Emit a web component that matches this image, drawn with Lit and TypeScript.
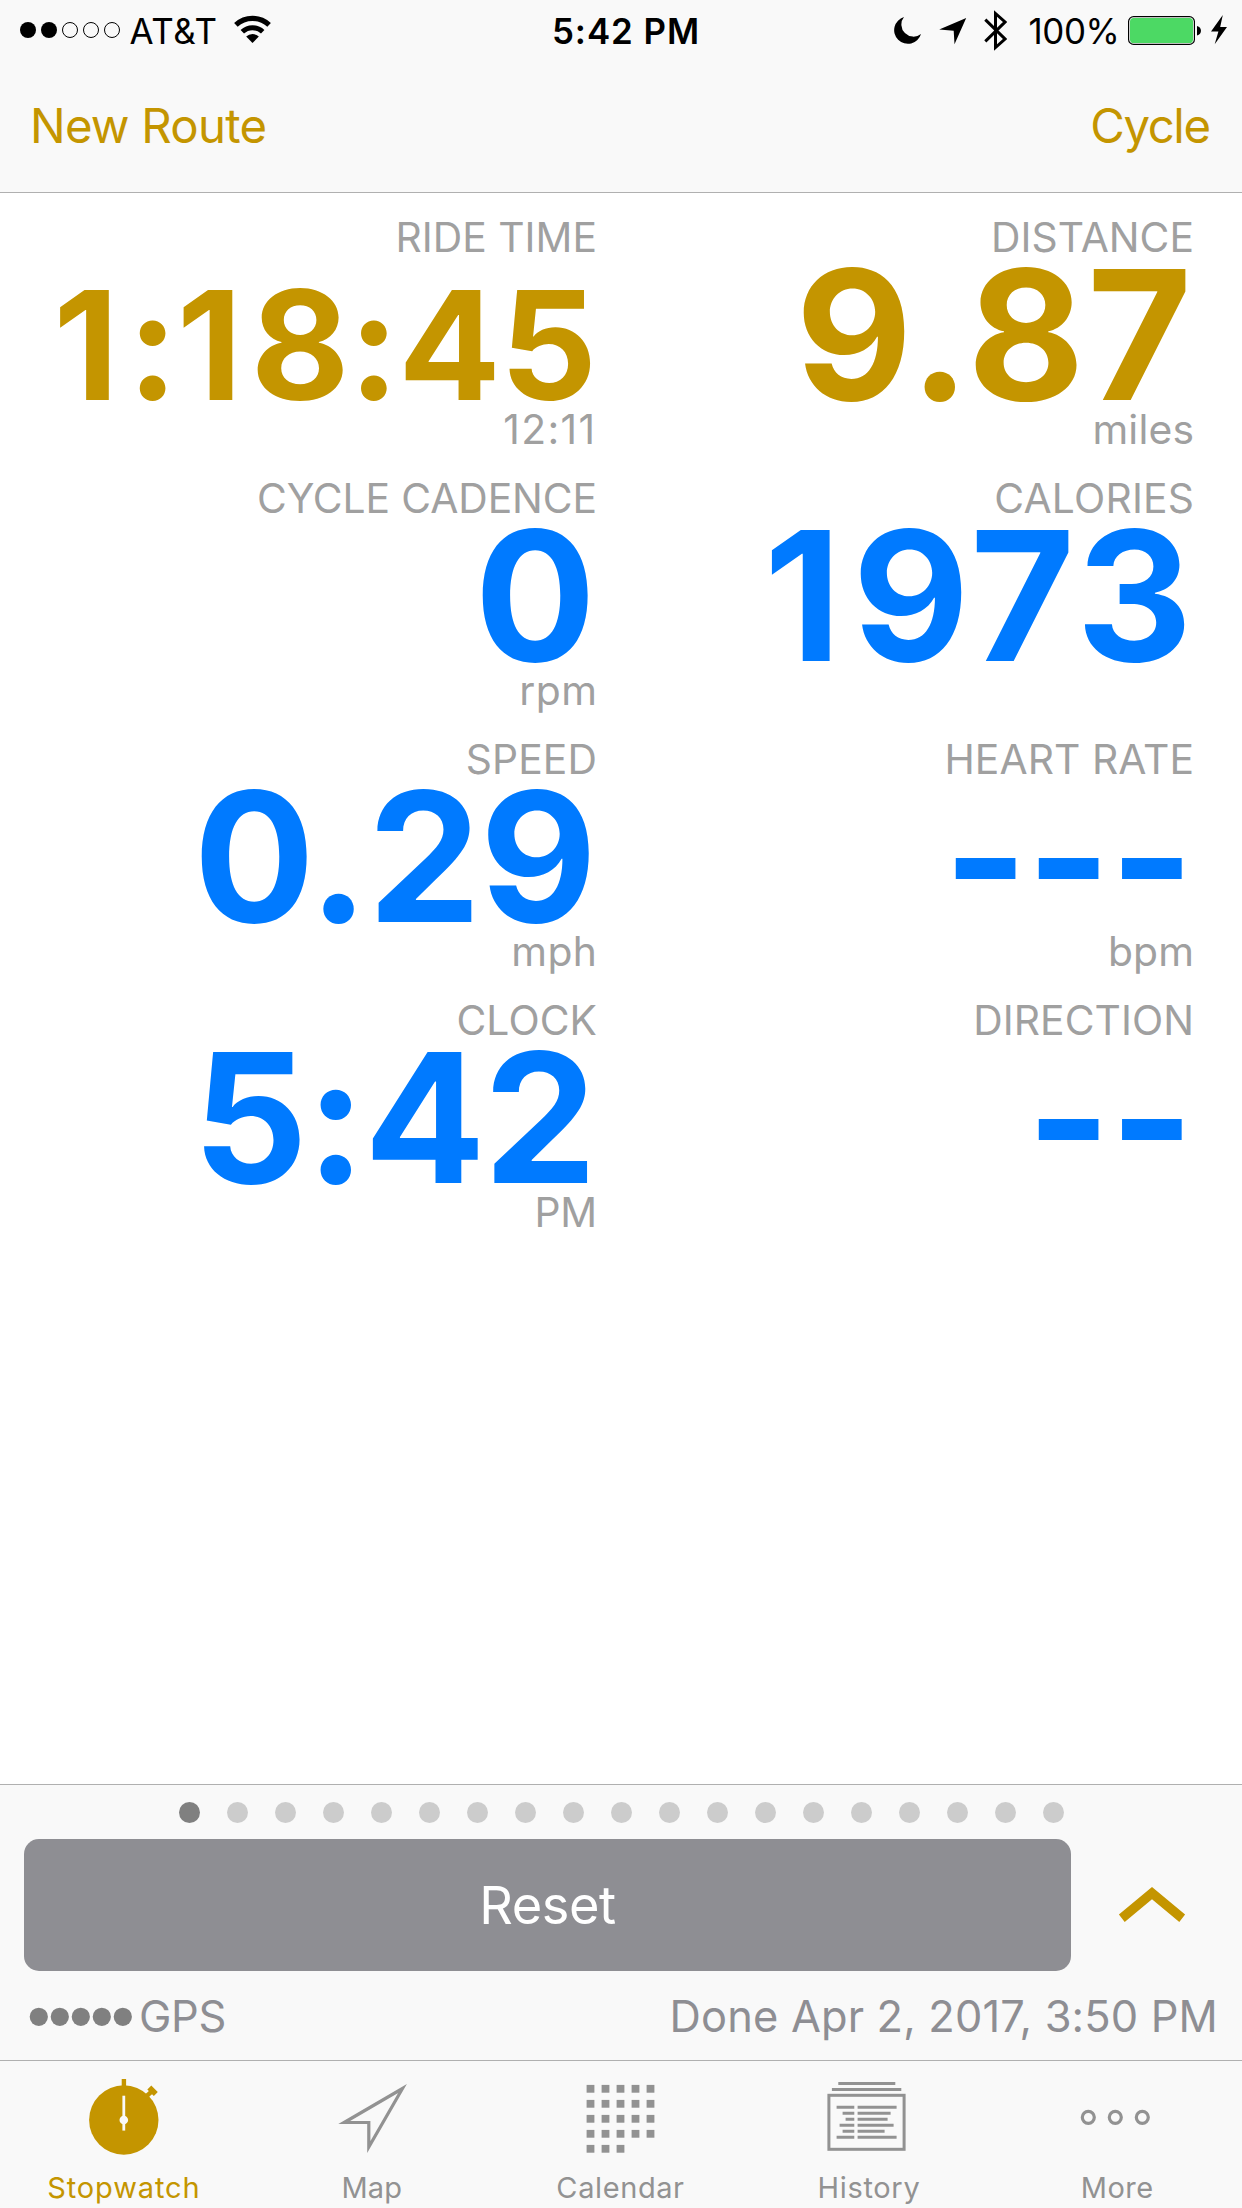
import { LitElement, html, css, svg, nothing } from "lit";
import { customElement } from "lit/decorators.js";
import { classMap } from "lit/directives/class-map.js";
import { styleMap } from "lit/directives/style-map.js";

interface Metric {
  label: string;
  value: string;
  unit?: string;
  accent?: boolean;
  compact?: boolean;
  tracking: [label: number, value: number, unit: number];
  inset?: [value: number, unit: number];
}

const METRICS: Metric[] = [
  { label: "RIDE TIME", value: "1:18:45", unit: "12:11", accent: true, compact: true, tracking: [0.03, -1, 1.4], inset: [0, 1.8] },
  { label: "DISTANCE", value: "9.87", unit: "miles", accent: true, tracking: [0.04, 2.7, 0.18], inset: [2, 0] },
  { label: "CYCLE CADENCE", value: "0", unit: "rpm", tracking: [-0.09, 0, 0.51], inset: [1, 0] },
  { label: "CALORIES", value: "1973", tracking: [0.22, 4.4, 0], inset: [1.5, 0] },
  { label: "SPEED", value: "0.29", unit: "mph", tracking: [0.15, -1, 0.5] },
  { label: "HEART RATE", value: "---", unit: "bpm", tracking: [0.08, -1, 0.2] },
  { label: "CLOCK", value: "5:42", unit: "PM", tracking: [0.1, -2, -0.5] },
  { label: "DIRECTION", value: "--", tracking: [0.07, -1, 0] },
];

const tracked = (px: number, inset = 0) =>
  styleMap({ letterSpacing: `${px}px`, marginRight: `${inset - px}px` });

const HISTORY_ROWS = [
  [12.6, 72.6],
  [18.6, 66.6],
  [21.6, 63.6],
  [15.6, 69.6],
  [18.6, 60.6],
  [12.6, 72.6],
];

const stopwatchIcon = svg`
  <circle cx="44.8" cy="46" r="34.7" fill="currentColor"/>
  <path d="M44.9 5V14M66 23.5L73.4 16.8" stroke="currentColor" stroke-width="4.4" fill="none"/>
  <path d="M70.3 13.6L76.8 20.1" stroke="currentColor" stroke-width="5.6" fill="none"/>
  <path d="M44.8 21.7V56.6" stroke="#f9f9f9" stroke-width="2.8"/>
  <circle cx="44.8" cy="46" r="4.3" fill="#f9f9f9"/>`;

const mapIcon = svg`
  <path d="M16.2 48.5L74.5 14.5L40.8 73V48.5Z" fill="none" stroke="currentColor" stroke-width="3.2" stroke-miterlimit="10"/>`;

const calendarIcon = svg`${Array.from({ length: 23 }, (_, i) => svg`
  <rect x=${10.6 + (i % 5) * 15} y=${10.9 + Math.floor(i / 5) * 15} width="7.8" height="7.8" fill="currentColor"/>`)}`;

const historyIcon = svg`
  <rect x="4.9" y="21.3" width="75.2" height="54" fill="none" stroke="currentColor" stroke-width="3"/>
  <path d="M14.3 9.4H71.3M7.9 15.4H77.3" stroke="currentColor" stroke-width="3"/>
  ${HISTORY_ROWS.map(([from, to], i) => svg`
    <path d="M${from} ${33.3 + i * 6}H30.3M33.6 ${33.3 + i * 6}H${to}" stroke="currentColor" stroke-width="3"/>`)}`;

const moreIcon = svg`${[15.3, 42.3, 69.3].map((cx) => svg`
  <circle cx=${cx} cy="43.3" r="6" fill="none" stroke="currentColor" stroke-width="3.2"/>`)}`;

const TABS = [
  { name: "Stopwatch", icon: stopwatchIcon, tracking: 0.88 },
  { name: "Map", icon: mapIcon, tracking: 0.2 },
  { name: "Calendar", icon: calendarIcon, tracking: 0.6 },
  { name: "History", icon: historyIcon, tracking: 0.69 },
  { name: "More", icon: moreIcon, tracking: 0.49 },
];

@customElement("status-bar")
export class StatusBar extends LitElement {
  static styles = css`
    :host {
      display: grid;
      grid-template-columns: 1fr auto 1fr;
      height: 60px;
      color: #000;
      font-size: 34.9px;
      line-height: 63px;
      white-space: nowrap;
    }
    .side { display: flex; height: 60px; }
    .left { padding-left: 20px; }
    .right { justify-content: flex-end; padding-right: 15px; }
    svg { display: block; flex: none; height: 60px; }
    .carrier { margin: 0 16px 0 9.5px; letter-spacing: 0.65px; }
    .time { font-weight: 600; letter-spacing: 0.94px; padding-left: 10px; }
    .arrow { margin: 0 17.5px 0 18px; }
    .percent { margin: 0 8.6px 0 21.5px; letter-spacing: -0.4px; }
    .bolt { margin-left: 10px; }
  `;

  render() {
    return html`
      <div class="side left">
        <svg width="100" viewBox="0 0 100 60">
          ${[0, 1, 2, 3, 4].map((i) => i < 2
            ? svg`<circle cx=${8 + i * 21} cy="30" r="8"/>`
            : svg`<circle cx=${8 + i * 21} cy="30" r="7.5" fill="none" stroke="#000" stroke-width="1"/>`)}
        </svg>
        <span class="carrier">AT&amp;T</span>
        <svg width="37" viewBox="0 0 37 60">
          <path d="M1.9 24.9A24.3 24.3 0 0 1 35.1 24.9" fill="none" stroke="#000" stroke-width="5.2"/>
          <path d="M8.3 31.8A14.9 14.9 0 0 1 28.7 31.8" fill="none" stroke="#000" stroke-width="5"/>
          <path d="M18.5 42.9L12.2 36.6A9 9 0 0 1 24.8 36.6Z"/>
        </svg>
      </div>
      <span class="time">5:42 PM</span>
      <div class="side right">
        <svg width="27" viewBox="0 0 27 60"><path d="M10 17A13.7 13.7 0 1 0 27 34A12.1 12.1 0 0 1 10 17Z"/></svg>
        <svg class="arrow" width="27.5" viewBox="0 0 27.5 60"><path d="M.2 29.5L27.2 18L15.5 44.3L14.7 30.7Z"/></svg>
        <svg width="23" viewBox="0 0 23 60">
          <path d="M1.3 19.6L21 39L11.5 47.5V13.5L21 22L1.3 41.4" fill="none" stroke="#000" stroke-width="3" stroke-miterlimit="10"/>
        </svg>
        <span class="percent">100%</span>
        <svg width="73" viewBox="0 0 73 60">
          <rect x=".6" y="16.6" width="65.8" height="27.8" rx="5" fill="#fff" stroke="#000" stroke-width="1.2"/>
          <rect x="2" y="18" width="63" height="25" rx="3.6" fill="#4cd964"/>
          <path d="M69 26C74.3 27 74.3 34.4 69 35.4Z"/>
        </svg>
        <svg class="bolt" width="16" viewBox="0 0 16 60"><path d="M11.8 15L0 31.5H7.4L3.7 44.3L16 27H9.2Z"/></svg>
      </div>
    `;
  }
}

@customElement("metric-cell")
export class MetricCell extends LitElement {
  static properties = { metric: { attribute: false } };
  declare metric: Metric;

  static styles = css`
    :host { display: flex; flex-direction: column; align-items: flex-end; height: 240px; white-space: nowrap; }
    .caption { height: 48px; line-height: 48px; font-size: 40.8px; color: #a0a0a0; }
    .value { height: 144px; line-height: 147px; font-size: 180px; font-weight: 700; color: #007aff; }
    .accent { color: #c49500; }
    .compact { font-size: 151.8px; line-height: 168px; }
    .one { letter-spacing: 11px; }
    .compact .one { letter-spacing: 8.5px; }
  `;

  render() {
    const { label, value, unit, accent, compact, tracking, inset = [0, 0] } = this.metric;
    // The narrow "1" gets extra room so the digits keep an even rhythm.
    const digits = value.split(/(1)/).filter(Boolean).map((part) => (part === "1" ? html`<span class="one">1</span>` : part));
    return html`
      <div class="caption" style=${tracked(tracking[0])}>${label}</div>
      <div class=${classMap({ value: true, accent: !!accent, compact: !!compact })} style=${tracked(tracking[1], inset[0])}>${digits}</div>
      ${unit ? html`<div class="caption" style=${tracked(tracking[2], inset[1])}>${unit}</div>` : nothing}
    `;
  }
}

@customElement("app-root")
export class AppRoot extends LitElement {
  static styles = css`
    :host {
      display: flex;
      flex-direction: column;
      box-sizing: border-box;
      width: 1242px;
      height: 2208px;
      background: #fff;
      font-family: Inter, Roboto, "Liberation Sans", sans-serif;
      overflow: hidden;
    }
    .header { background: #f9f9f9; border-bottom: 1px solid #b0b0b0; }
    .nav {
      display: flex;
      justify-content: space-between;
      height: 132px;
      line-height: 132px;
      padding: 0 31px 0 30px;
      font-size: 47.3px;
      color: #c49500;
    }
    .new-route { letter-spacing: -0.75px; }
    .cycle { letter-spacing: -1.4px; margin-right: 1.4px; }
    .metrics {
      flex: 1;
      display: grid;
      grid-template-columns: 597px 597px;
      grid-auto-rows: 240px;
      row-gap: 21px;
      padding-top: 20px;
    }
    .panel { background: #f9f9f9; border-top: 1px solid #b0b0b0; padding-top: 17px; }
    .pages { display: flex; justify-content: center; gap: 27px; margin-bottom: 16px; }
    .page { width: 21px; height: 21px; border-radius: 50%; background: #ccc; }
    .current { background: #808080; }
    .actions { display: flex; align-items: center; height: 132px; padding-left: 24px; }
    .reset {
      width: 1047px;
      height: 132px;
      line-height: 132px;
      border-radius: 15px;
      background: #8e8e93;
      color: #fff;
      font-size: 52.3px;
      letter-spacing: -0.4px;
      text-align: center;
    }
    .chevron { margin-left: 47px; display: block; }
    .info {
      display: flex;
      align-items: flex-start;
      height: 89px;
      padding: 0 24px 0 29px;
      line-height: 90px;
      font-size: 43.4px;
      color: #8e8e93;
    }
    .signal { display: block; margin: 35px 6px 0 0; }
    .gps { letter-spacing: -0.29px; flex: 1; }
    .done { letter-spacing: 0.17px; }
    .tabs {
      display: grid;
      grid-template-columns: repeat(5, 1fr);
      height: 147px;
      background: #f9f9f9;
      border-top: 1px solid #b0b0b0;
    }
    .tab { display: flex; flex-direction: column; align-items: center; padding-top: 13px; color: #929292; }
    .tab svg { display: block; }
    .active { color: #c49500; }
    .tab-name { margin-top: 11px; padding-right: 1.6px; height: 36px; line-height: 37px; font-size: 29px; }
  `;

  render() {
    return html`
      <div class="header">
        <status-bar></status-bar>
        <div class="nav">
          <span class="new-route">New Route</span>
          <span class="cycle">Cycle</span>
        </div>
      </div>
      <div class="metrics">
        ${METRICS.map((metric) => html`<metric-cell .metric=${metric}></metric-cell>`)}
      </div>
      <div class="panel">
        <div class="pages">
          ${Array.from({ length: 19 }, (_, i) => html`<span class=${classMap({ page: true, current: i === 0 })}></span>`)}
        </div>
        <div class="actions">
          <div class="reset">Reset</div>
          <svg class="chevron" width="68" height="36" viewBox="0 0 68 36">
            <path d="M34 0L67.1 27.4L61.3 35L34 12.2L6.7 35L.9 27.4Z" fill="#c49500"/>
          </svg>
        </div>
        <div class="info">
          <svg class="signal" width="104" height="20" viewBox="0 0 104 20">
            ${[0, 1, 2, 3, 4].map((i) => svg`<circle cx=${9.8 + i * 21} cy="10.8" r="9.1" fill="#808080"/>`)}
          </svg>
          <span class="gps">GPS</span>
          <span class="done">Done Apr 2, 2017, 3:50 PM</span>
        </div>
      </div>
      <div class="tabs">
        ${TABS.map((tab, i) => html`
          <div class=${classMap({ tab: true, active: i === 0 })}>
            <svg width="90" height="84" viewBox="0 0 90 84">${tab.icon}</svg>
            <span class="tab-name" style=${tracked(tab.tracking)}>${tab.name}</span>
          </div>
        `)}
      </div>
    `;
  }
}
